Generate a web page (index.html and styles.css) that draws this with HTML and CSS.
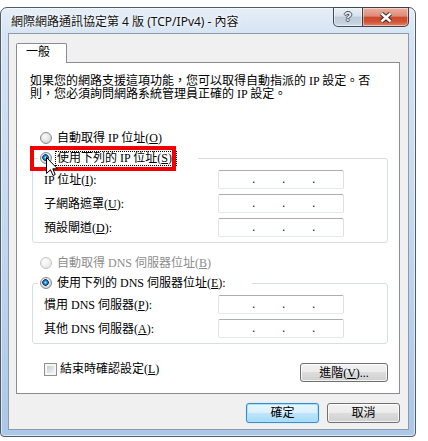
FILE: index.html
```html
<!DOCTYPE html>
<html lang="zh-Hant">
<head>
<meta charset="utf-8">
<title>網際網路通訊協定第 4 版 (TCP/IPv4) - 內容</title>
<link rel="stylesheet" href="styles.css">
</head>
<body>
<div class="window">
  <div class="titlebar">
    <span class="title">網際網路通訊協定第 4 版 (TCP/IPv4) - 內容</span>
    <div class="caption">
      <div class="cap-btn help"><span class="help-glyph">?</span></div>
      <div class="cap-btn close">
        <svg width="14" height="11" viewBox="0 0 14 11">
          <path d="M2.5 1.5 L11.5 9.5 M11.5 1.5 L2.5 9.5" stroke="#3a2a28" stroke-width="4.4" fill="none"/>
          <path d="M2.5 1.5 L11.5 9.5 M11.5 1.5 L2.5 9.5" stroke="#ffffff" stroke-width="2.4" fill="none"/>
        </svg>
      </div>
    </div>
  </div>
  <div class="client">
    <div class="tabs"><div class="tab">一般</div></div>
    <div class="panel">
      <p class="desc">如果您的網路支援這項功能，您可以取得自動指派的 IP 設定。否<br>則，您必須詢問網路系統管理員正確的 IP 設定。</p>

      <div class="radio-row first"><span class="radio"></span><span class="lbl">自動取得 IP 位址(<u>O</u>)</span></div>

      <fieldset class="group">
        <legend class="legend legend-ip">
          <span class="legend-inner"><span class="radio checked"></span><span class="lbl focus">使用下列的 IP 位址(<u>S</u>):</span></span>
          <span class="redbox"></span>
        </legend>
        <div class="fields">
          <span class="flabel">IP 位址(<u>I</u>):</span>
          <div class="ip"><span>.</span><span>.</span><span>.</span></div>
          <span class="flabel">子網路遮罩(<u>U</u>):</span>
          <div class="ip"><span>.</span><span>.</span><span>.</span></div>
          <span class="flabel">預設閘道(<u>D</u>):</span>
          <div class="ip"><span>.</span><span>.</span><span>.</span></div>
        </div>
      </fieldset>

      <div class="radio-row dns-auto"><span class="radio disabled"></span><span class="lbl">自動取得 DNS 伺服器位址(<u>B</u>)</span></div>

      <fieldset class="group">
        <legend class="legend legend-dns">
          <span class="legend-inner"><span class="radio checked"></span><span class="lbl">使用下列的 DNS 伺服器位址(<u>E</u>):</span></span>
        </legend>
        <div class="fields">
          <span class="flabel">慣用 DNS 伺服器(<u>P</u>):</span>
          <div class="ip"><span>.</span><span>.</span><span>.</span></div>
          <span class="flabel">其他 DNS 伺服器(<u>A</u>):</span>
          <div class="ip"><span>.</span><span>.</span><span>.</span></div>
        </div>
      </fieldset>

      <div class="bottom-row">
        <span class="check"><span class="checkbox"></span><span>結束時確認設定(<u>L</u>)</span></span>
        <button class="btn adv">進階(<u>V</u>)...</button>
      </div>
    </div>
    <div class="dlg-buttons">
      <button class="btn default">確定</button>
      <button class="btn">取消</button>
    </div>
  </div>
</div>
<svg class="cursor" width="13" height="20" viewBox="0 0 13 20">
  <path d="M0.5 0.5 V16.5 L4.5 12.8 L7 18.5 L9.2 17.5 L6.8 11.8 H11.5 Z" fill="#fff" stroke="#000" stroke-width="1" stroke-linejoin="miter"/>
</svg>
</body>
</html>
```

FILE: styles.css
```css
html, body {
  margin: 0;
  background: #ffffff;
}

body {
  font-family: "Liberation Serif", "Noto Sans CJK TC", serif;
  font-size: 12px;
  color: #000;
}

.window {
  width: 416px;
  margin-top: 7px;
  box-sizing: border-box;
  border: 1px solid #4f5c69;
  border-radius: 7px 7px 4px 4px;
  padding: 0 6px 6px 7px;
  background: linear-gradient(180deg, #e6eef7 0px, #d6e4f3 26px, #c6daef 200px, #abc7e7 430px);
  box-shadow: inset 0 0 0 1px rgba(255, 255, 255, 0.55);
}

.titlebar {
  display: flex;
  align-items: flex-start;
  height: 25px;
}

.title {
  margin: 6px 0 0 3px;
  font-family: "Noto Sans", "Noto Sans CJK TC", sans-serif;
  font-size: 12px;
  line-height: 16px;
  color: #111;
  text-shadow: 0 0 6px #fff, 0 0 3px #fff;
}

.caption {
  display: flex;
  margin-left: auto;
  margin-top: -1px;
}

.cap-btn {
  height: 20px;
  box-sizing: border-box;
  border: 1px solid rgba(38, 50, 64, 0.85);
  display: flex;
  align-items: center;
  justify-content: center;
  box-shadow: inset 0 0 0 1px rgba(255, 255, 255, 0.45);
}

.help {
  width: 29px;
  border-right: none;
  border-radius: 0 0 0 5px;
  background: linear-gradient(180deg, #eaf0f6 0%, #d9e2ec 45%, #bfcbd9 50%, #c3d0de 80%, #d3dfeb 100%);
}

.help-glyph {
  font-family: "Liberation Sans", sans-serif;
  font-weight: bold;
  font-size: 13px;
  line-height: 14px;
  color: #eef1f4;
  text-shadow: 1px 0 0 #4a5561, -1px 0 0 #4a5561, 0 1px 0 #4a5561, 0 -1px 0 #4a5561;
}

.close {
  width: 47px;
  border-radius: 0 0 5px 0;
  background: linear-gradient(180deg, #eab0a2 0%, #df8a75 45%, #cc4a2e 52%, #cf5234 75%, #e6866a 100%);
}

.client {
  border: 1px solid #8c9aab;
  background: #f0f0f0;
  padding: 9px 8px 6px 7px;
}

.tabs {
  display: flex;
}

.tab {
  position: relative;
  z-index: 1;
  width: 51px;
  height: 20px;
  box-sizing: border-box;
  margin-bottom: -1px;
  padding-left: 9px;
  border: 1px solid #898c95;
  border-bottom: none;
  border-radius: 2px 2px 0 0;
  background: #fff;
  line-height: 17px;
}

.panel {
  border: 1px solid #898c95;
  background: #fff;
  padding: 12px 11px 11px 13px;
}

.desc {
  margin: 0;
  line-height: 13px;
}

.radio-row {
  display: flex;
  align-items: center;
  height: 16px;
  margin-left: 10px;
  gap: 3px;
  line-height: 16px;
}

.radio-row.first {
  margin-top: 29px;
}

.radio-row.dns-auto {
  margin-top: 12px;
  color: #8d8d8d;
}

.lbl {
  border: 1px solid transparent;
  padding: 0 1px;
  line-height: 13px;
}

.lbl.focus {
  border: 1px dotted #000;
}

.radio {
  flex: none;
  width: 12px;
  height: 12px;
  box-sizing: border-box;
  border-radius: 50%;
  border: 1px solid #8a8b8c;
  background: radial-gradient(circle at 40% 35%, #fbfbfb 0, #e6e6e6 45%, #cfcfcf 80%);
}

.radio.checked {
  background:
    radial-gradient(circle at 45% 45%, #b6ebff 0, #2f93e2 1.4px, #0d3a6c 3px, rgba(13, 58, 108, 0) 3.6px),
    radial-gradient(circle at 40% 35%, #fbfbfb 0, #e6e6e6 45%, #cfcfcf 80%);
}

.radio.disabled {
  border-color: #c5c5c5;
  background: radial-gradient(circle at 40% 35%, #fdfdfd 0, #f0f0f0 50%, #e2e2e2 85%);
}

.group {
  margin: 4px 0 0 2px;
  padding: 0;
  min-width: 0;
  border: 1px solid #d5dfe5;
  border-radius: 3px;
}

.legend {
  position: relative;
  box-sizing: border-box;
  margin-left: 5px;
  padding: 0 2px;
  height: 16px;
}

.legend-ip {
  width: 160px;
}

.legend-dns {
  width: 214px;
}

.legend-inner {
  display: flex;
  align-items: center;
  gap: 3px;
  height: 16px;
}

.redbox {
  position: absolute;
  left: -8px;
  top: -4px;
  width: 146px;
  height: 25px;
  box-sizing: border-box;
  border: 4px solid #f20000;
}

.fields {
  display: grid;
  grid-template-columns: 174px 126px;
  row-gap: 5px;
  align-items: center;
  padding: 4px 0 5px 11px;
}

.flabel {
  line-height: 16px;
}

.ip {
  height: 19px;
  box-sizing: border-box;
  border: 1px solid;
  border-color: #abadb3 #dbdfe6 #e3e9ef #e2e3ea;
  border-radius: 2px;
  background: #fff;
  display: flex;
  gap: 27px;
  padding-left: 33px;
  font-family: "Liberation Sans", sans-serif;
  font-size: 12px;
  line-height: 17px;
}

.ip span {
  width: 3px;
}

.bottom-row {
  display: flex;
  align-items: flex-start;
  margin-top: 19px;
}

.check {
  display: flex;
  align-items: center;
  gap: 3px;
  margin-left: 14px;
  line-height: 13px;
}

.checkbox {
  width: 13px;
  height: 13px;
  box-sizing: border-box;
  border: 1px solid #8e8f8f;
  padding: 2px;
  background: linear-gradient(135deg, #c9ccd1, #f3f3f3) content-box, #f6f6f6;
}

.btn {
  font: inherit;
  color: #000;
  box-sizing: border-box;
  padding: 0;
  border: 1px solid #707070;
  border-radius: 3px;
  background: linear-gradient(180deg, #f2f2f2 0%, #ebebeb 50%, #dddddd 50%, #cfcfcf 100%);
  box-shadow: inset 0 0 0 1px rgba(255, 255, 255, 0.75);
  line-height: 16px;
}

.adv {
  width: 88px;
  height: 19px;
  margin-left: auto;
}

.dlg-buttons {
  display: flex;
  justify-content: flex-end;
  gap: 8px;
  margin-top: 9px;
}

.dlg-buttons .btn {
  width: 73px;
  height: 20px;
}

.btn.default {
  border-color: #3a8ccf;
  background: linear-gradient(180deg, #eaf6fd 0%, #d9f0fc 50%, #bee6fd 50%, #a7d9f5 100%);
  box-shadow: inset 0 0 0 1px #a5e2fb, 0 0 1px #5fc2f5;
}

.cursor {
  position: absolute;
  left: 46px;
  top: 157px;
}
```
